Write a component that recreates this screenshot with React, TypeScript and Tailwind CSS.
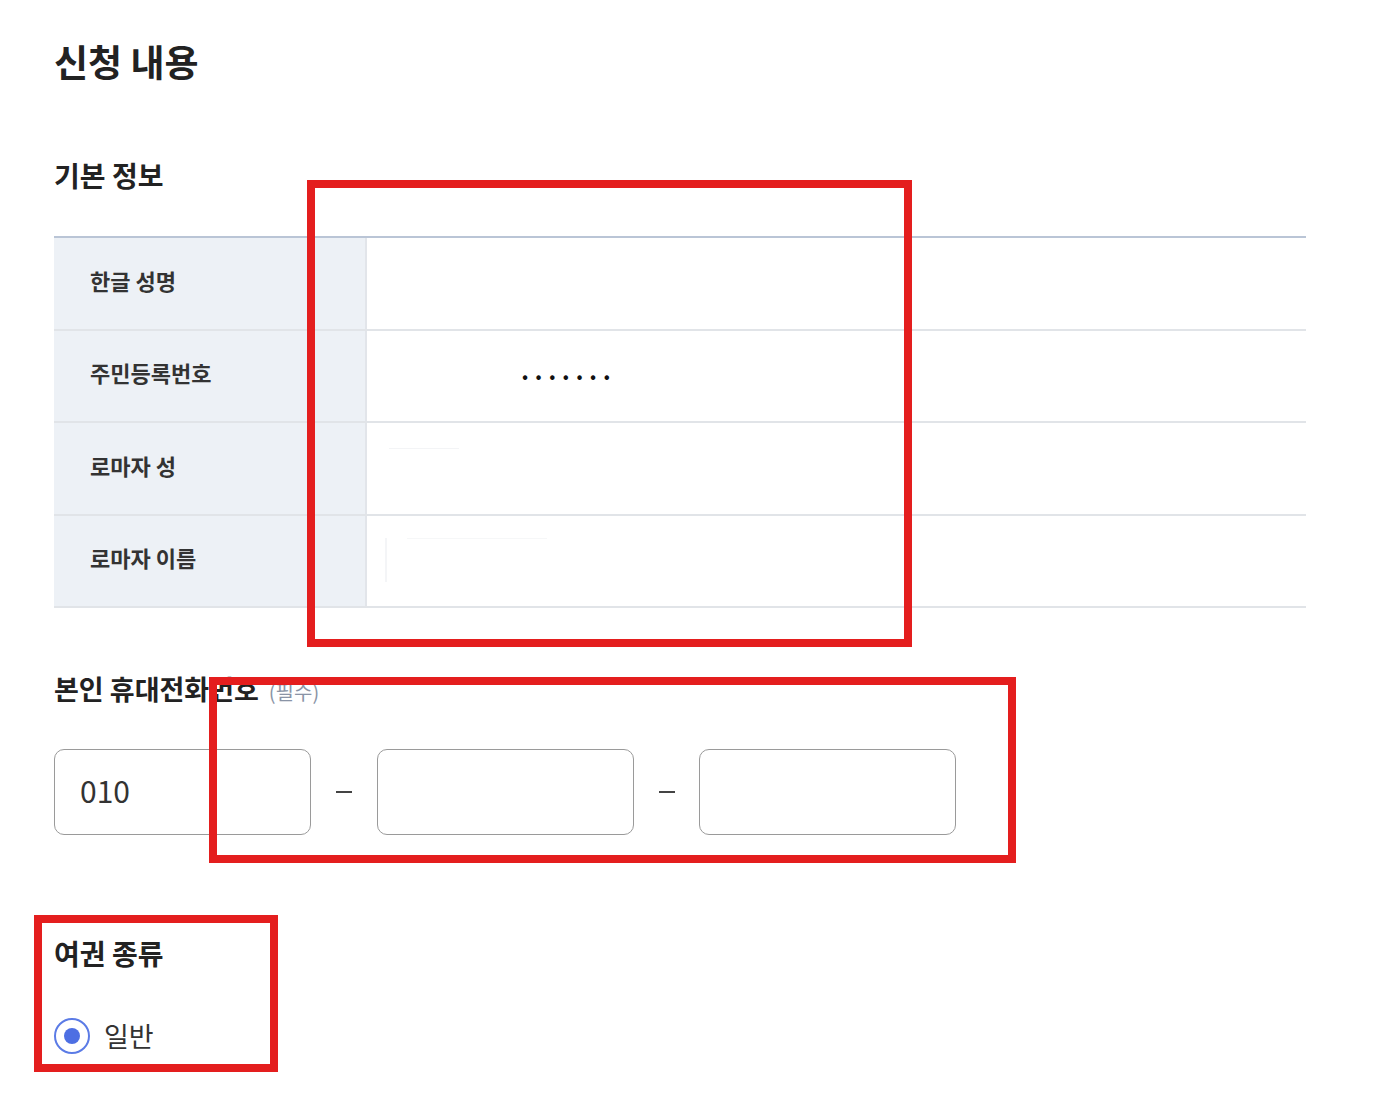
import React from "react";

const font = { fontFamily: '"Noto Sans CJK KR", "Noto Sans", sans-serif' };

function Row({ label, children }: { label: string; children?: React.ReactNode }) {
  return (
    <div className="flex h-[92.5px] border-b-2 border-[#e1e4e8]">
      <div className="w-[313px] bg-[#edf1f6] border-r-2 border-[#e2e5ea] flex items-center pl-[36px] pb-[6px] text-[22px] font-bold text-[#333]">
        {label}
      </div>
      <div className="flex-1 relative flex items-center">{children}</div>
    </div>
  );
}

export default function App() {
  return (
    <div className="relative w-[1396px] h-[1110px] bg-white overflow-hidden" style={font}>
      <div className="pl-[54px] pt-[38px] w-[1306px]">
        <h1 className="text-[37px] leading-[46px] font-bold text-[#222]">신청 내용</h1>
        <h2 className="mt-[73px] text-[28px] leading-[36px] font-bold text-[#222]">기본 정보</h2>
        <div className="mt-[43px] border-t-2 border-[#bac5d6] w-[1252px]">
          <Row label="한글 성명" />
          <Row label="주민등록번호">
            <span className="absolute left-[155px] top-[34px] text-[#111] text-[18px] tracking-[7.5px] leading-[20px]">•••••••</span>
          </Row>
          <Row label="로마자 성">
            <div className="absolute left-[22px] top-[25px] w-[70px] h-px bg-[#f3f4f6]" />
          </Row>
          <Row label="로마자 이름">
            <div className="absolute left-[18px] top-[22px] w-[2px] h-[44px] bg-[#f4f5f7]" />
            <div className="absolute left-[40px] top-[22px] w-[140px] h-px bg-[#f6f7f8]" />
          </Row>
        </div>
        <div className="mt-[64px] flex items-baseline">
          <span className="text-[27px] leading-[34px] font-bold text-[#222]">본인 휴대전화번호</span>
          <span className="ml-[10px] text-[20px] text-[#8a94a6]">(필수)</span>
        </div>
        <div className="mt-[42px] flex items-center">
          <div className="w-[257px] h-[86px] rounded-[10px] border-[1.5px] border-[#9a9a9a] flex items-center pl-[25px] pb-[3px] text-[30px] text-[#333]">
            010
          </div>
          <div className="w-[66px] flex justify-center">
            <div className="w-[16px] h-[2px] bg-[#444]" />
          </div>
          <div className="w-[257px] h-[86px] rounded-[10px] border-[1.5px] border-[#9a9a9a]" />
          <div className="w-[65px] flex justify-center">
            <div className="w-[16px] h-[2px] bg-[#444]" />
          </div>
          <div className="w-[257px] h-[86px] rounded-[10px] border-[1.5px] border-[#9a9a9a]" />
        </div>
        <h2 className="mt-[100px] text-[28px] leading-[36px] font-bold text-[#222]">여권 종류</h2>
        <div className="mt-[47px] flex items-center">
          <div className="w-[36px] h-[36px] rounded-full border-2 border-[#5b7be6] flex items-center justify-center">
            <div className="w-[16px] h-[16px] rounded-full bg-[#4d6fe3]" />
          </div>
          <span className="ml-[14px] text-[27px] leading-[36px] text-[#333]">일반</span>
        </div>
      </div>

      <div className="absolute left-[307px] top-[180px] w-[605px] h-[467px] border-[8px] border-[#e41e1e]" />
      <div className="absolute left-[209px] top-[677px] w-[807px] h-[186px] border-[8px] border-[#e41e1e]" />
      <div className="absolute left-[34px] top-[915px] w-[244px] h-[157px] border-[8px] border-[#e41e1e]" />
    </div>
  );
}
